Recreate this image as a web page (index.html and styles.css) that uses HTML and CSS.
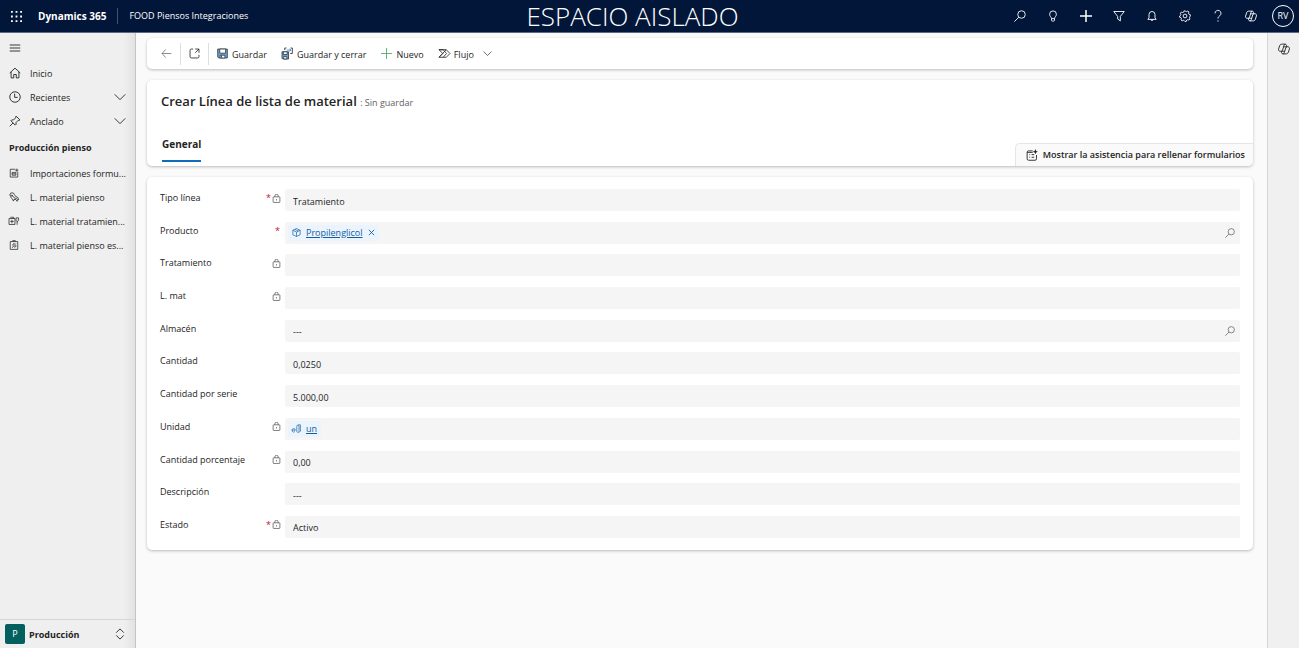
FILE: index.html
```html
<!DOCTYPE html>
<html lang="es">
<head>
<meta charset="utf-8">
<meta name="viewport" content="width=device-width, initial-scale=1">
<title>Crear Línea de lista de material - Dynamics 365</title>
<link rel="stylesheet" href="styles.css">
</head>
<body>
<svg class="sprite" aria-hidden="true">
  <symbol id="search" viewBox="0 0 16 16"><circle cx="10" cy="6" r="5"/><path d="M6.400 9.600 0.500 15.500"/></symbol>
  <symbol id="chevron" viewBox="0 0 16 16"><path d="M1 4.500 8 11.500l7-7"/></symbol>
  <symbol id="lock" viewBox="0 0 16 16"><rect x="2" y="5" width="12" height="10" rx="1"/><path d="M5 5V3.500a3 3 0 0 1 6 0V5M8 9v2.500"/></symbol>
  <symbol id="copilot" viewBox="0 0 16 16"><path d="M4.500 11H3C1 11 .3 9.500.8 8l1.300-4C2.600 2.300 3.600 1.500 5 1.500h4.500c1 0 1.500.6 1.800 1.500l.6 2H13c2 0 2.700 1.500 2.200 3l-1.300 4c-.5 1.700-1.500 2.500-2.900 2.500H6.500c-1 0-1.500-.6-1.800-1.500zM4.500 11c.8 0 1.200-.4 1.500-1.300L8 3.200c.3-1 .8-1.700 1.500-1.700M12 5c-1 0-1.300.4-1.600 1.300L8.500 12.500c-.3 1.200-.9 2-2 2M7.500 5H12M4.500 11H9"/></symbol>
</svg>

<header class="topbar">
  <div class="top-left">
    <button class="icon-btn" aria-label="Iniciador de aplicaciones">
      <svg class="icon dots" viewBox="0 0 12 12"><path d="M0 0h2v2H0zM5 0h2v2H5zM10 0h2v2h-2zM0 5h2v2H0zM5 5h2v2H5zM10 5h2v2h-2zM0 10h2v2H0zM5 10h2v2H5zM10 10h2v2h-2z"/></svg>
    </button>
    <a class="brand" href="#">Dynamics 365</a>
    <a class="app-name" href="#">FOOD Piensos Integraciones</a>
  </div>
  <span class="environment">ESPACIO AISLADO</span>
  <div class="top-actions">
    <button class="icon-btn" aria-label="Buscar"><svg class="icon"><use href="#search"/></svg></button>
    <button class="icon-btn" aria-label="Novedades"><svg class="icon" viewBox="0 0 16 16"><path d="M6 11.500C6 9.500 3.500 8.500 3.500 5.700a4.500 4.500 0 0 1 9 0c0 2.800-2.500 3.800-2.500 5.800v2c0 .8-.5 1.300-1.200 1.300H7.200c-.7 0-1.200-.5-1.200-1.300zM6 11.500h4"/></svg></button>
    <button class="icon-btn" aria-label="Crear"><svg class="icon plus" viewBox="0 0 16 16"><path d="M8 0v16M0 8h16"/></svg></button>
    <button class="icon-btn" aria-label="Filtro"><svg class="icon" viewBox="0 0 16 16"><path d="M1 2h14L9.800 8.500v6L6.200 12V8.500z"/></svg></button>
    <button class="icon-btn" aria-label="Notificaciones"><svg class="icon" viewBox="0 0 16 16"><path d="M2.500 12.500 4 10.200V6a4 4 0 0 1 8 0v4.200l1.500 2.300zM6.500 12.500a1.500 1.500 0 0 0 3 0"/></svg></button>
    <button class="icon-btn" aria-label="Configuración"><svg class="icon" viewBox="0 0 16 16"><path d="m6.800 1-.5 1.800-1.300.6-1.700-.7-1.500 1.600.8 1.600-.5 1.300L.8 8l.2 1.900 1.800.5.500 1-.7 1.700 1.600 1.400 1.600-.8 1.300.5.900 1.200 1.800-.3.500-1.700 1.200-.6 1.700.7 1.400-1.600-.7-1.600.5-1.200L15.200 8l-.3-1.900-1.700-.5-.6-1.200.7-1.700-1.600-1.300-1.600.8-1.300-.5zM8 5.500a2.500 2.500 0 1 0 0 5 2.500 2.500 0 0 0 0-5z"/></svg></button>
    <button class="icon-btn" aria-label="Ayuda"><svg class="icon" viewBox="0 0 16 16"><path d="M4 4.500a4 4 0 1 1 6.600 3C9 8.800 8 9.300 8 11.500M8 13.700v1.800"/></svg></button>
    <button class="icon-btn" aria-label="Copilot"><svg class="icon"><use href="#copilot"/></svg></button>
    <button class="avatar" aria-label="Cuenta">RV</button>
  </div>
</header>

<div class="shell">
  <nav class="sidebar" aria-label="Navegación">
    <button class="menu-btn" aria-label="Contraer menú"><svg class="icon" viewBox="0 0 16 16"><path d="M1 4h14M1 8h14M1 12h14"/></svg></button>
    <a class="nav-item" href="#"><svg class="icon" viewBox="0 0 16 16"><path d="M1 8 8 1.500 15 8M2.800 6.500v8H6.300V10h3.400v4.500h3.500v-8"/></svg><span>Inicio</span></a>
    <button class="nav-item"><svg class="icon" viewBox="0 0 16 16"><circle cx="8" cy="8" r="7"/><path d="M7.500 3.500V8.500H11.500"/></svg><span>Recientes</span><svg class="icon"><use href="#chevron"/></svg></button>
    <button class="nav-item"><svg class="icon" viewBox="0 0 16 16"><path d="m9.500 1.500 5 5-1 .8-1.200-.2-3 3 .2 2.200-1.200 1.200-5.800-5.800L3.700 6.500l2.200.2 3-3-.2-1.200zM5.400 10.600 1 15"/></svg><span>Anclado</span><svg class="icon"><use href="#chevron"/></svg></button>
    <h2 class="nav-title">Producción pienso</h2>
    <a class="nav-item" href="#"><svg class="icon small" viewBox="0 0 16 16"><path d="M10 2H2v12.500h12V6M12.500 1v5M10 3.500h5"/><path d="M5 7h6v4.500H5zM5 9.300h6"/></svg><span>Importaciones formu...</span></a>
    <a class="nav-item" href="#"><svg class="icon small" viewBox="0 0 16 16"><path d="M1 5 3 1.500h4L8.500 4l2.500 3.500 3 1 1.500 4-2-.5-.5 3-2-3H8l-1 2.500L5.500 11 3 9V6zM4.500 4.500l4 5 4 1M3 6h3"/></svg><span>L. material pienso</span></a>
    <a class="nav-item" href="#"><svg class="icon small" viewBox="0 0 16 16"><path d="M0 4h9.500v9.500H0zM2 2h5.500v2M4.700 6v5.500M2 8.700h5.500M13 14V8M11.300 3h4v4L13 9l-1.700-2z"/></svg><span>L. material tratamien...</span></a>
    <a class="nav-item" href="#"><svg class="icon small" viewBox="0 0 16 16"><path d="M2 2.500h12v12.500H2zM6 2.500V1h4v1.500M5 12.500l6-7M6 9l.5-2.500 2.500-1M8 11.500l3-1V8"/></svg><span>L. material pienso es...</span></a>
    <button class="area-switch"><span class="area-badge">P</span><span class="area-name">Producción</span><svg class="icon" viewBox="0 0 16 16"><path d="M3 6.200 8 1.200l5 5M3 9.800l5 5 5-5"/></svg></button>
  </nav>

  <main class="content">
    <div class="card toolbar" role="toolbar" aria-label="Comandos">
      <button class="cmd cmd-icon back" aria-label="Atrás"><svg class="icon" viewBox="0 0 16 16"><path d="M7 2 1.500 8 7 14M1.500 8H15"/></svg></button>
      <button class="cmd cmd-icon" aria-label="Abrir en ventana nueva"><svg class="icon" viewBox="0 0 16 16"><path d="M6 1.500H3.500a2 2 0 0 0-2 2v9a2 2 0 0 0 2 2h9a2 2 0 0 0 2-2V10M9 1.500h5.500V7M14.500 1.500 9 7"/></svg></button>
      <button class="cmd"><svg class="icon" viewBox="0 0 16 16"><path class="disk" d="M1 1.500h14v13H2.500L1 13z"/><path class="paper" d="M4 1.500h8.500v6H4zM4.500 10.500h7v4h-7z"/><path d="M6.500 11v3"/></svg><span>Guardar</span></button>
      <button class="cmd"><svg class="icon" viewBox="0 0 16 16"><path class="disk" d="M0 5.500h9.500V16H1L0 15z"/><path class="paper" d="M2 5.500h5.500v4H2zM2.500 12.500h4.500V16H2.500z"/><path d="M4 3V0h2.500M12.500 0H15v8h-3"/><path class="blue" d="M7 3h5.500M11 1l2 2-2 2"/></svg><span>Guardar y cerrar</span></button>
      <button class="cmd"><svg class="icon green" viewBox="0 0 16 16"><path d="M8 0v16M0 8h16"/></svg><span>Nuevo</span></button>
      <button class="cmd flow"><svg class="icon" viewBox="0 0 16 16"><path d="M0 2.500h10.500L16 8l-5.500 5.500H0L5.500 8zM0 2.500h6L11 8l-5 5.500M0 13.500 10.500 2.500"/></svg><span>Flujo</span><svg class="icon"><use href="#chevron"/></svg></button>
    </div>

    <section class="card record-head">
      <h1>Crear Línea de lista de material <small>: Sin guardar</small></h1>
      <div class="tab-row">
        <div role="tablist"><button class="tab" role="tab" aria-selected="true">General</button></div>
        <button class="assist"><svg class="icon" viewBox="0 0 16 16"><path d="M9 2.500H3.500a2 2 0 0 0-2 2V13a2 2 0 0 0 2 2H12a2 2 0 0 0 2-2V8M4.500 7.500h1M7.500 7.500H11M4.500 11h1M7.500 11H11M1.500 4.500H9"/><path class="spark" d="m12.500 0 1 2.500L16 3.500l-2.500 1-1 2.500-1-2.500L9 3.500l2.500-1z"/></svg>Mostrar la asistencia para rellenar formularios</button>
      </div>
    </section>

    <form class="card fields">
      <div class="row"><div class="caption"><label for="tipo">Tipo línea</label><b>*</b><svg class="icon"><use href="#lock"/></svg></div><input id="tipo" class="control" value="Tratamiento" readonly></div>
      <div class="row"><div class="caption"><label for="producto">Producto</label><b>*</b></div>
        <div class="control lookup"><span class="chip"><svg class="icon" viewBox="0 0 16 16"><path d="M8 1 14.500 4v8L8 15 1.500 12V4zM1.500 4 8 7.200 14.500 4M8 7.200V15M5 2.500l6.500 3"/></svg><a id="producto" href="#">Propilenglicol</a><button type="button" class="remove" aria-label="Quitar Propilenglicol"><svg class="icon" viewBox="0 0 16 16"><path d="m2 2 12 12M14 2 2 14"/></svg></button></span><button type="button" class="find" aria-label="Buscar producto"><svg class="icon"><use href="#search"/></svg></button></div></div>
      <div class="row"><div class="caption"><label for="tratamiento">Tratamiento</label><svg class="icon"><use href="#lock"/></svg></div><input id="tratamiento" class="control" readonly></div>
      <div class="row"><div class="caption"><label for="lmat">L. mat</label><svg class="icon"><use href="#lock"/></svg></div><input id="lmat" class="control" readonly></div>
      <div class="row"><div class="caption"><label for="almacen">Almacén</label></div>
        <div class="control lookup"><input id="almacen" class="lookup-input" value="---"><button type="button" class="find" aria-label="Buscar almacén"><svg class="icon"><use href="#search"/></svg></button></div></div>
      <div class="row"><div class="caption"><label for="cantidad">Cantidad</label></div><input id="cantidad" class="control" value="0,0250"></div>
      <div class="row"><div class="caption"><label for="serie">Cantidad por serie</label></div><input id="serie" class="control" value="5.000,00"></div>
      <div class="row"><div class="caption"><label for="unidad">Unidad</label><svg class="icon"><use href="#lock"/></svg></div>
        <div class="control lookup"><span class="chip"><svg class="icon" viewBox="0 0 16 16"><path d="M0 11h6a3 3 0 1 0-1 2.500M8.500 4v9.500M8.500 4a2 2 0 0 1 4 0v8a2 2 0 0 1-4 1.500M11 1.500h4V13l-2 1.500"/></svg><a id="unidad" href="#">un</a></span></div></div>
      <div class="row"><div class="caption"><label for="porcentaje">Cantidad porcentaje</label><svg class="icon"><use href="#lock"/></svg></div><input id="porcentaje" class="control" value="0,00" readonly></div>
      <div class="row"><div class="caption"><label for="descripcion">Descripción</label></div><input id="descripcion" class="control" value="---"></div>
      <div class="row"><div class="caption"><label for="estado">Estado</label><b>*</b><svg class="icon"><use href="#lock"/></svg></div><input id="estado" class="control" value="Activo" readonly></div>
    </form>
  </main>

  <aside class="rail"><button class="icon-btn" aria-label="Panel de Copilot"><svg class="icon"><use href="#copilot"/></svg></button></aside>
</div>
</body>
</html>
```
FILE: styles.css
```css
* { box-sizing: border-box; }

body {
  margin: 0;
  min-height: 100vh;
  display: flex;
  flex-direction: column;
  font: 9px/16px "Open Sans", "Noto Sans", sans-serif;
  color: #242424;
  background: #fafafa;
}

button, input {
  font: inherit;
  color: inherit;
  border: 0;
  padding: 0;
  margin: 0;
  background: none;
}

a { color: inherit; text-decoration: none; }
h1, h2 { margin: 0; }
.sprite { position: absolute; width: 0; height: 0; }

.icon {
  width: 12px;
  height: 12px;
  flex: none;
  fill: none;
  stroke: currentColor;
  stroke-width: 1.2;
  overflow: visible;
}

/* Top bar */
.topbar {
  display: grid;
  grid-template-columns: 1fr auto 1fr;
  align-items: center;
  height: 33px;
  color: #fff;
  background: #011638;
  border-bottom: 1px solid #5a6a86;
}
.top-left { display: flex; align-items: center; }
.icon-btn { display: flex; align-items: center; justify-content: center; width: 32px; height: 32px; }
.dots { width: 11px; height: 11px; fill: currentColor; stroke: none; }
.brand { margin-left: 6px; font-size: 10px; font-weight: 700; }
.app-name { margin-left: 11px; padding-left: 11px; border-left: 1px solid #43526c; }
.environment { margin-right: 34px; font-size: 26px; font-weight: 300; line-height: 32px; }
.top-actions { display: flex; align-items: center; justify-content: flex-end; gap: 1px; padding-right: 5px; }
.plus { stroke-width: 2; }
.avatar { width: 22px; height: 22px; margin-left: 4px; border: 1px solid #fff; border-radius: 50%; line-height: 20px; }

.shell { flex: 1; display: grid; grid-template-columns: 136px 1fr 32px; }

/* Sidebar */
.sidebar {
  display: flex;
  flex-direction: column;
  padding-top: 2px;
  background: linear-gradient(to right, #efefef 92%, #e2e2e2);
  border-right: 1px solid #c4c4c4;
}
.menu-btn { display: flex; align-items: center; height: 26px; padding-left: 9px; }
.nav-item { display: flex; align-items: center; height: 24px; padding: 0 9px; text-align: left; white-space: nowrap; }
.nav-item span { flex: 1; margin-left: 9px; padding-top: 2px; }
.nav-item .small { width: 10px; height: 10px; margin-right: 2px; }
.nav-title { padding: 7px 9px 5px; font-size: 9px; font-weight: 700; line-height: 16px; }
.area-switch { display: flex; align-items: center; height: 29px; margin-top: auto; padding: 0 9px 0 5px; border-top: 1px solid #d6d6d6; text-align: left; }
.area-badge { width: 20px; height: 20px; color: #fff; background: #03605f; border-radius: 2px; line-height: 19px; text-align: center; }
.area-name { flex: 1; margin-left: 4px; padding-top: 2px; font-weight: 700; }

/* Content */
.content { display: flex; flex-direction: column; gap: 11px; padding: 5px 14px 11px 11px; }
.card { background: #fff; border-radius: 5px; box-shadow: 0 1px 3px rgba(0, 0, 0, .25); }

.toolbar { display: flex; align-items: center; height: 31px; padding-left: 6px; }
.cmd { display: flex; align-items: center; gap: 4px; height: 22px; margin-left: 8px; padding-right: 7px; }
.cmd span { padding-top: 2px; }
.cmd .icon { width: 11px; height: 11px; }
.cmd-icon { justify-content: center; width: 28px; margin: 0; padding: 0; border-right: 1px solid #dedede; }
.back { color: #767676; }
.disk { fill: #6aa5d8; stroke: #323a45; }
.paper { fill: #fff; stroke: #323a45; }
.blue { stroke: #2b7cd3; }
.green { color: #45a55c; }
.flow .icon:last-child { width: 9px; height: 9px; margin-left: 5px; }

.record-head { overflow: hidden; }
h1 { padding: 9px 14px 0; font-size: 13px; font-weight: 600; line-height: 24px; }
h1 small { font-size: 9px; font-weight: 400; line-height: 12px; color: #616161; }
.tab-row { display: flex; align-items: flex-end; justify-content: space-between; height: 53px; padding-left: 15px; }
.tab { display: block; margin-bottom: 4px; padding-bottom: 8px; border-bottom: 2px solid #0f6cbd; font-size: 10px; font-weight: 700; }
.assist { display: flex; align-items: center; gap: 5px; height: 23px; padding: 0 8px 0 10px; background: #fafafa; border: solid #e6e6e6; border-width: 1px 0 0 1px; border-radius: 5px 0 0; font-weight: 600; }
.spark { fill: currentColor; stroke: none; }

/* Form */
.fields { display: flex; flex-direction: column; justify-content: space-between; min-height: 373px; padding: 12px 13px; }
.row { display: grid; grid-template-columns: 121px 1fr; column-gap: 4px; }
.caption { display: flex; align-items: center; height: 18px; }
.caption label { flex: 1; }
.caption b { margin-right: 1px; font-weight: 400; color: #c50f1f; }
.caption .icon { width: 9px; height: 9px; color: #424242; }
.control { width: 100%; height: 22px; padding: 2px 8px 0; background: #f5f5f5; border-radius: 2px; }
.lookup { display: flex; align-items: center; padding: 0 5px 0 3px; }
.lookup-input { flex: 1; padding: 2px 0 0 5px; }
.chip { display: flex; align-items: center; gap: 5px; height: 16px; padding: 0 4px; color: #115ea3; background: #ebf3fc; border-radius: 2px; }
.chip a { text-decoration: underline; }
.chip .icon { width: 9px; height: 9px; }
.remove { display: flex; }
.remove .icon { width: 7px; height: 7px; stroke-width: 2; }
.find { display: flex; margin-left: auto; color: #616161; }
.find .icon { width: 10px; height: 10px; }

.rail { background: #f0f0f0; border-left: 1px solid #d6d6d6; }
```
